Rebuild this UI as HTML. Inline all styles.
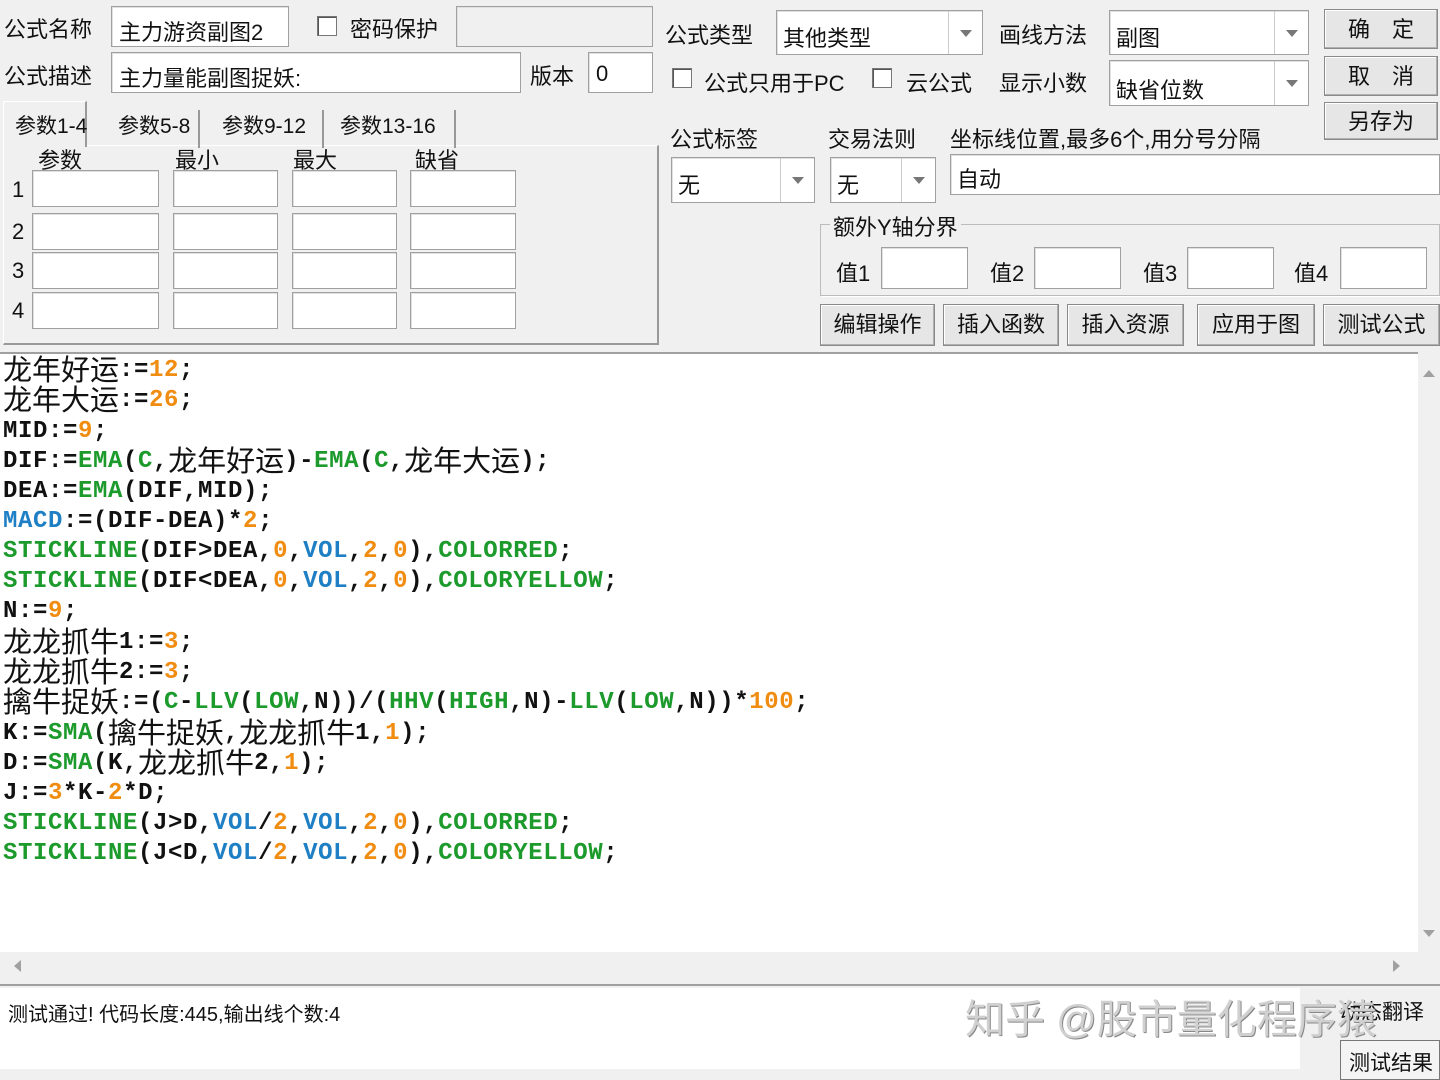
<!DOCTYPE html>
<html><head><meta charset="utf-8"><style>
*{box-sizing:border-box;margin:0;padding:0}
body{width:1440px;height:1069px;background:#f0f0f0;position:relative;overflow:hidden;font-family:"Liberation Sans","Noto Sans CJK SC",sans-serif;font-size:22px;color:#111}
.a{position:absolute;white-space:nowrap}
.in{position:absolute;background:#fff;border:1px solid #a0a0a0;box-shadow:inset 1px 1px 0 #e0e0e0}
.btn{position:absolute;background:#e6e6e6;border:1px solid #8a8a8a;box-shadow:inset -1px -1px 0 #b0b0b0,inset 1px 1px 0 #fff;text-align:center;font-size:22px;line-height:40px}
.cb{position:absolute;width:20px;height:20px;background:#fff;border:1px solid #777;box-shadow:inset 1px 1px 0 #555}
.dd{position:absolute;right:0;top:0;bottom:0;width:34px;border-left:1px solid #ccc}
.dd:after{content:"";position:absolute;left:11px;top:50%;margin-top:-3px;border:6px solid transparent;border-top:7px solid #777}
.code{position:absolute;left:0;top:352px;width:1418px;height:600px;background:#fff;border-top:2px solid #a0a0a0}
.l{position:absolute;left:3px;height:30px;font-family:"Liberation Mono",monospace;font-weight:bold;font-size:24px;line-height:30px;white-space:pre;color:#111;letter-spacing:0.6px}
.c{display:inline-block;vertical-align:top;height:30px;line-height:30px;font-family:"Noto Sans CJK SC",sans-serif;font-weight:normal;font-size:29px;letter-spacing:0;margin-top:-3px}
.g{color:#1c9a2c}.o{color:#f08c10}.b{color:#1f7fc4}
.tab{font-size:21px}
</style></head><body>
<div class="a" style="left:4px;top:12px">公式名称</div>
<div class="in" style="left:111px;top:6px;width:178px;height:41px"><span class="a" style="left:7px;top:8px">主力游资副图2</span></div>
<div class="cb" style="left:317px;top:16px"></div>
<div class="a" style="left:350px;top:12px">密码保护</div>
<div class="in" style="left:456px;top:6px;width:197px;height:41px;background:#f0f0f0"></div>
<div class="a" style="left:4px;top:59px">公式描述</div>
<div class="in" style="left:111px;top:52px;width:410px;height:41px"><span class="a" style="left:7px;top:8px">主力量能副图捉妖:</span></div>
<div class="a" style="left:530px;top:59px">版本</div>
<div class="in" style="left:588px;top:52px;width:65px;height:41px"><span class="a" style="left:7px;top:8px">0</span></div>
<!-- tabs -->
<div style="position:absolute;left:3px;top:145px;width:656px;height:200px;border:1px solid #fff;border-right:2px solid #999;border-bottom:2px solid #999"></div>
<div class="a tab" style="left:3px;top:101px;width:84px;height:46px;background:#f0f0f0;border:1px solid #fff;border-right:2px solid #999;border-bottom:none;padding:8px 0 0 11px">参数1-4</div>
<div class="a tab" style="left:110px;top:110px;width:90px;border-right:2px solid #999;padding:0 0 8px 8px">参数5-8</div>
<div class="a tab" style="left:210px;top:110px;width:114px;border-right:2px solid #999;padding:0 0 8px 12px">参数9-12</div>
<div class="a tab" style="left:330px;top:110px;width:126px;border-right:2px solid #999;padding:0 0 8px 10px">参数13-16</div>
<div class="a" style="left:38px;top:143px">参数</div><div class="a" style="left:175px;top:143px">最小</div><div class="a" style="left:293px;top:143px">最大</div><div class="a" style="left:415px;top:143px">缺省</div>
<div class="a" style="left:12px;top:177px">1</div><div class="a" style="left:12px;top:219px">2</div><div class="a" style="left:12px;top:258px">3</div><div class="a" style="left:12px;top:298px">4</div>
<div class="in" style="left:32px;top:170px;width:127px;height:37px"></div><div class="in" style="left:173px;top:170px;width:105px;height:37px"></div><div class="in" style="left:292px;top:170px;width:105px;height:37px"></div><div class="in" style="left:410px;top:170px;width:106px;height:37px"></div>
<div class="in" style="left:32px;top:213px;width:127px;height:37px"></div><div class="in" style="left:173px;top:213px;width:105px;height:37px"></div><div class="in" style="left:292px;top:213px;width:105px;height:37px"></div><div class="in" style="left:410px;top:213px;width:106px;height:37px"></div>
<div class="in" style="left:32px;top:252px;width:127px;height:37px"></div><div class="in" style="left:173px;top:252px;width:105px;height:37px"></div><div class="in" style="left:292px;top:252px;width:105px;height:37px"></div><div class="in" style="left:410px;top:252px;width:106px;height:37px"></div>
<div class="in" style="left:32px;top:292px;width:127px;height:37px"></div><div class="in" style="left:173px;top:292px;width:105px;height:37px"></div><div class="in" style="left:292px;top:292px;width:105px;height:37px"></div><div class="in" style="left:410px;top:292px;width:106px;height:37px"></div>
<!-- right -->
<div class="a" style="left:665px;top:18px">公式类型</div>
<div class="in" style="left:776px;top:10px;width:207px;height:45px"><span class="a" style="left:6px;top:10px">其他类型</span><div class="dd"></div></div>
<div class="a" style="left:999px;top:18px">画线方法</div>
<div class="in" style="left:1109px;top:10px;width:200px;height:45px"><span class="a" style="left:6px;top:10px">副图</span><div class="dd"></div></div>
<div class="cb" style="left:672px;top:68px"></div><div class="a" style="left:704px;top:66px">公式只用于PC</div>
<div class="cb" style="left:872px;top:68px"></div><div class="a" style="left:906px;top:66px">云公式</div>
<div class="a" style="left:999px;top:66px">显示小数</div>
<div class="in" style="left:1109px;top:60px;width:200px;height:46px"><span class="a" style="left:6px;top:12px">缺省位数</span><div class="dd"></div></div>
<div class="btn" style="left:1324px;top:9px;width:114px;height:40px">确　定</div>
<div class="btn" style="left:1324px;top:56px;width:114px;height:40px">取　消</div>
<div class="btn" style="left:1324px;top:102px;width:114px;height:38px;line-height:38px">另存为</div>
<div class="a" style="left:670px;top:122px">公式标签</div><div class="a" style="left:828px;top:122px">交易法则</div><div class="a" style="left:950px;top:122px">坐标线位置,最多6个,用分号分隔</div>
<div class="in" style="left:671px;top:157px;width:144px;height:46px"><span class="a" style="left:6px;top:10px">无</span><div class="dd"></div></div>
<div class="in" style="left:830px;top:157px;width:106px;height:46px"><span class="a" style="left:6px;top:10px">无</span><div class="dd"></div></div>
<div class="in" style="left:950px;top:154px;width:490px;height:41px"><span class="a" style="left:6px;top:7px">自动</span></div>
<div style="position:absolute;left:820px;top:224px;width:620px;height:72px;border:1px solid #bbb;box-shadow:1px 1px 0 #fff"></div>
<div class="a" style="left:830px;top:210px;background:#f0f0f0;padding:0 3px">额外Y轴分界</div>
<div class="a" style="left:836px;top:256px">值1</div><div class="in" style="left:881px;top:247px;width:87px;height:42px"></div>
<div class="a" style="left:990px;top:256px">值2</div><div class="in" style="left:1034px;top:247px;width:87px;height:42px"></div>
<div class="a" style="left:1143px;top:256px">值3</div><div class="in" style="left:1187px;top:247px;width:87px;height:42px"></div>
<div class="a" style="left:1294px;top:256px">值4</div><div class="in" style="left:1340px;top:247px;width:87px;height:42px"></div>
<div class="btn" style="left:820px;top:304px;width:115px;height:42px">编辑操作</div>
<div class="btn" style="left:943px;top:304px;width:116px;height:42px">插入函数</div>
<div class="btn" style="left:1067px;top:304px;width:117px;height:42px">插入资源</div>
<div class="btn" style="left:1197px;top:304px;width:118px;height:42px">应用于图</div>
<div class="btn" style="left:1323px;top:304px;width:117px;height:42px">测试公式</div>
<!-- code -->
<div class="code">
<div class="l" style="top:2px"><span class="c">龙年好运</span>:=<span class="o">12</span>;</div>
<div class="l" style="top:32px"><span class="c">龙年大运</span>:=<span class="o">26</span>;</div>
<div class="l" style="top:63px">MID:=<span class="o">9</span>;</div>
<div class="l" style="top:93px">DIF:=<span class="g">EMA</span>(<span class="g">C</span>,<span class="c">龙年好运</span>)-<span class="g">EMA</span>(<span class="g">C</span>,<span class="c">龙年大运</span>);</div>
<div class="l" style="top:123px">DEA:=<span class="g">EMA</span>(DIF,MID);</div>
<div class="l" style="top:153px"><span class="b">MACD</span>:=(DIF-DEA)*<span class="o">2</span>;</div>
<div class="l" style="top:183px"><span class="g">STICKLINE</span>(DIF&gt;DEA,<span class="o">0</span>,<span class="b">VOL</span>,<span class="o">2</span>,<span class="o">0</span>),<span class="g">COLORRED</span>;</div>
<div class="l" style="top:213px"><span class="g">STICKLINE</span>(DIF&lt;DEA,<span class="o">0</span>,<span class="b">VOL</span>,<span class="o">2</span>,<span class="o">0</span>),<span class="g">COLORYELLOW</span>;</div>
<div class="l" style="top:243px">N:=<span class="o">9</span>;</div>
<div class="l" style="top:274px"><span class="c">龙龙抓牛</span>1:=<span class="o">3</span>;</div>
<div class="l" style="top:304px"><span class="c">龙龙抓牛</span>2:=<span class="o">3</span>;</div>
<div class="l" style="top:334px"><span class="c">擒牛捉妖</span>:=(<span class="g">C</span>-<span class="g">LLV</span>(<span class="g">LOW</span>,N))/(<span class="g">HHV</span>(<span class="g">HIGH</span>,N)-<span class="g">LLV</span>(<span class="g">LOW</span>,N))*<span class="o">100</span>;</div>
<div class="l" style="top:365px">K:=<span class="g">SMA</span>(<span class="c">擒牛捉妖</span>,<span class="c">龙龙抓牛</span>1,<span class="o">1</span>);</div>
<div class="l" style="top:395px">D:=<span class="g">SMA</span>(K,<span class="c">龙龙抓牛</span>2,<span class="o">1</span>);</div>
<div class="l" style="top:425px">J:=<span class="o">3</span>*K-<span class="o">2</span>*D;</div>
<div class="l" style="top:455px"><span class="g">STICKLINE</span>(J&gt;D,<span class="b">VOL</span>/<span class="o">2</span>,<span class="b">VOL</span>,<span class="o">2</span>,<span class="o">0</span>),<span class="g">COLORRED</span>;</div>
<div class="l" style="top:485px"><span class="g">STICKLINE</span>(J&lt;D,<span class="b">VOL</span>/<span class="o">2</span>,<span class="b">VOL</span>,<span class="o">2</span>,<span class="o">0</span>),<span class="g">COLORYELLOW</span>;</div>
</div>
<div style="position:absolute;left:1418px;top:352px;width:22px;height:600px;background:#f0f0f0"></div>
<div class="a" style="left:1423px;top:364px;border:6px solid transparent;border-bottom:7px solid #a0a0a0"></div>
<div class="a" style="left:1423px;top:930px;border:6px solid transparent;border-top:7px solid #a0a0a0"></div>
<div class="a" style="left:8px;top:960px;border:6px solid transparent;border-right:7px solid #a0a0a0"></div>
<div class="a" style="left:1393px;top:960px;border:6px solid transparent;border-left:7px solid #a0a0a0"></div>
<div style="position:absolute;left:0;top:984px;width:1440px;height:2px;background:#a0a0a0"></div>
<div style="position:absolute;left:0;top:988px;width:1300px;height:81px;background:#fff"></div>
<div class="a" style="left:8px;top:998px;font-size:20px">测试通过! 代码长度:445,输出线个数:4</div>
<div class="a" style="left:1340px;top:996px;font-size:21px">动态翻译</div>
<div class="a" style="left:1340px;top:1040px;width:100px;height:40px;border:1px solid #777;background:#f4f4f4;padding:6px 0 0 8px;font-size:21px">测试结果</div>
<div class="a" style="left:965px;top:987px;font-size:40px;color:#d0d0d0;text-shadow:1px 1px 0 #888">知乎 @股市量化程序猿</div>
</body></html>
